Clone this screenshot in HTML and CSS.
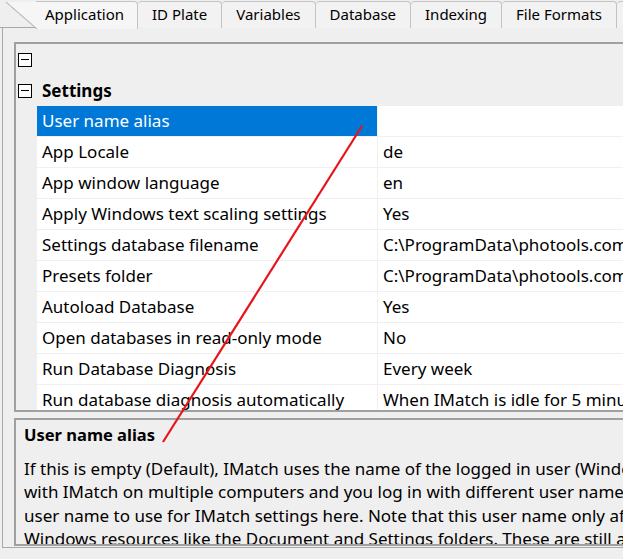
FILE: index.html
```html
<!DOCTYPE html>
<html lang="en">
<head>
    <meta charset="UTF-8">
    <title>IMatch Preferences - Application</title>
    <link rel="stylesheet" href="styles.css">
</head>
<body>

    <div class="window">
        <!-- Tab strip -->
        <div class="tabs">
            <div class="tab active">Application</div>
            <div class="tab">ID Plate</div>
            <div class="tab">Variables</div>
            <div class="tab">Database</div>
            <div class="tab">Indexing</div>
            <div class="tab">File Formats</div>
            <div class="tab"></div>
        </div>

        <div class="page">
            <!-- Property grid -->
            <div class="grid">
                <div class="group-row">
                    <span class="toggle"></span>
                </div>
                <div class="group-row">
                    <span class="toggle"></span>
                    <span class="group-name">Settings</span>
                </div>
                <div class="prop selected">
                    <div class="name">User name alias</div>
                    <div class="value"></div>
                </div>
                <div class="prop">
                    <div class="name">App Locale</div>
                    <div class="value">de</div>
                </div>
                <div class="prop">
                    <div class="name">App window language</div>
                    <div class="value">en</div>
                </div>
                <div class="prop">
                    <div class="name">Apply Windows text scaling settings</div>
                    <div class="value">Yes</div>
                </div>
                <div class="prop">
                    <div class="name">Settings database filename</div>
                    <div class="value">C:\ProgramData\photools.com\IMatch6\config.db</div>
                </div>
                <div class="prop">
                    <div class="name">Presets folder</div>
                    <div class="value">C:\ProgramData\photools.com\IMatch6\presets</div>
                </div>
                <div class="prop">
                    <div class="name">Autoload Database</div>
                    <div class="value">Yes</div>
                </div>
                <div class="prop">
                    <div class="name">Open databases in read-only mode</div>
                    <div class="value">No</div>
                </div>
                <div class="prop">
                    <div class="name">Run Database Diagnosis</div>
                    <div class="value">Every week</div>
                </div>
                <div class="prop">
                    <div class="name">Run database diagnosis automatically</div>
                    <div class="value">When IMatch is idle for 5 minutes</div>
                </div>
            </div>

            <!-- Description box -->
            <div class="desc">
                <div class="desc-title">User name alias</div>
                <p class="desc-text">If this is empty (Default), IMatch uses the name of the logged in user (Windows user name). If you work<br>
                with IMatch on multiple computers and you log in with different user names, you can specify the<br>
                user name to use for IMatch settings here. Note that this user name only affects IMatch, not<br>
                Windows resources like the Document and Settings folders. These are still accessed via Windows.</p>
            </div>
        </div>

        <!-- annotation arrow drawn over the screenshot -->
        <svg class="annotation" width="623" height="559" viewBox="0 0 623 559">
            <line x1="362" y1="126" x2="163" y2="442" stroke="#e8141c" stroke-width="2.2"/>
        </svg>
    </div>

</body>
</html>
```

FILE: styles.css
```css
html, body {
    margin: 0;
    padding: 0;
    overflow: hidden;
}
body {
    font-family: "Noto Sans", "Open Sans", sans-serif;
    font-size: 17px;
    color: #000;
    background-color: #f0f0f0;
}
.window {
    position: relative;
    width: 623px;
    height: 559px;
    overflow: hidden;
    background: #f0efef;
}
.tabs {
    display: flex;
    height: 28px;
    padding-left: 36px;
    border-bottom: 1px solid #a9a9a9;
    box-sizing: border-box;
    white-space: nowrap;
    font-size: 15px;
}
.tab {
    padding: 0 14px;
    line-height: 25px;
    height: 26px;
    margin-top: 1px;
    border: 1px solid #c3c3c3;
    border-bottom: none;
    border-left: none;
    border-radius: 4px 4px 0 0;
    background: #f3f2f2;
    flex-shrink: 0;
}
.tab:last-child {
    width: 40px;
}
.tab.active {
    position: relative;
    padding: 0 13px 0 9px;
    margin-top: 1px;
    height: 27px;
    background: #f7f6f6;
    border-left: none;
    border-radius: 0 4px 0 0;
}
/* slanted left edge of the selected tab */
.tab.active::before {
    content: "";
    position: absolute;
    left: -30px;
    top: 0;
    width: 31px;
    height: 27px;
    background: linear-gradient(to top right, transparent calc(50% - 1px), #b5b5b5 50%, #f7f6f6 calc(50% + 1px));
}
.page {
    margin-left: 2px;
    width: 700px;
    height: 520px;
    border-left: 1px solid #a9a9a9;
    border-bottom: 1px solid #a9a9a9;
    padding: 14px 0 0 11px;
    box-sizing: border-box;
}
.grid {
    height: 370px;
    border: 2px solid #a0a0a0;
    border-right: none;
    background: #f0efef;
    overflow: hidden;
    box-sizing: border-box;
}
.group-row {
    display: flex;
    align-items: center;
    height: 31px;
    padding-left: 2px;
}
.toggle {
    position: relative;
    width: 12px;
    height: 12px;
    border: 1px solid #000;
    background: #fff;
}
.toggle::after {
    content: "";
    position: absolute;
    left: 2px;
    right: 2px;
    top: 5px;
    height: 1px;
    background: #000;
}
.group-name {
    margin-left: 10px;
    font-weight: bold;
}
.prop {
    display: flex;
    height: 31px;
    margin-left: 21px;
    background: #fff;
    border-bottom: 1px solid #f0f0f0;
    box-sizing: border-box;
}
.prop .name {
    flex: 0 0 341px;
    padding-left: 5px;
    line-height: 30px;
    border-right: 1px solid #f0f0f0;
    box-sizing: border-box;
    white-space: nowrap;
    overflow: hidden;
}
.prop .value {
    flex: 1;
    padding-left: 5px;
    line-height: 30px;
    white-space: nowrap;
    overflow: hidden;
}
.prop.selected .name {
    background: #0078d7;
    color: #fff;
}
.desc {
    margin-top: 6px;
    height: 128px;
    border: 2px solid #a0a0a0;
    border-right: none;
    background: #f0efef;
    padding: 3px 8px 0 8px;
    box-sizing: border-box;
    overflow: hidden;
}
.desc-title {
    font-weight: bold;
    font-size: 16.5px;
    line-height: 24px;
}
.desc-text {
    margin: 10px 0 0 0;
    line-height: 23.4px;
    white-space: nowrap;
}
.annotation {
    position: absolute;
    left: 0;
    top: 0;
    pointer-events: none;
}
```
